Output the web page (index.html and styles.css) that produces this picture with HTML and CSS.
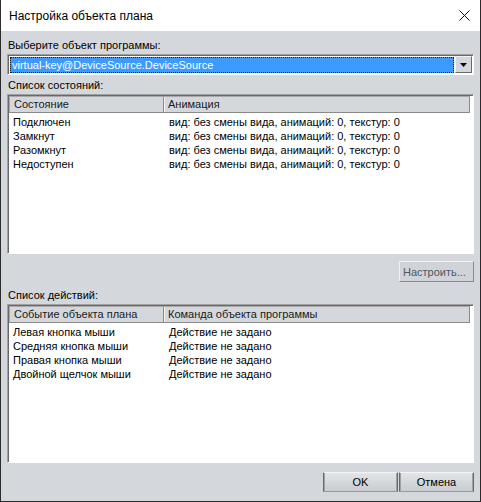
FILE: index.html
```html
<!DOCTYPE html>
<html lang="ru">
<head>
  <meta charset="UTF-8" />
  <title>Настройка объекта плана</title>
  <link rel="stylesheet" href="styles.css">
</head>
<body>
  <div class="window">
    <div class="titlebar">
      <span class="title">Настройка объекта плана</span>
      <svg class="close" width="11" height="11" viewBox="0 0 11 11">
        <path d="M0.5 0.5 L10.5 10.5 M10.5 0.5 L0.5 10.5" stroke="#111" stroke-width="1" fill="none" />
      </svg>
    </div>

    <div class="content">
      <div class="label label-first">Выберите объект программы:</div>
      <div class="combo">
        <div class="combo-value">virtual-key@DeviceSource.DeviceSource</div>
        <div class="combo-btn">
          <svg width="7" height="4" viewBox="0 0 7 4"><path d="M0 0 H7 L3.5 4 Z" fill="#000" /></svg>
        </div>
      </div>

      <div class="label">Список состояний:</div>
      <div class="list">
        <div class="list-head">
          <div class="col col-first">Состояние</div>
          <div class="col">Анимация</div>
        </div>
        <div class="list-body">
          <div class="row"><span class="col-first">Подключен</span><span>вид: без смены вида, анимаций: 0, текстур: 0</span></div>
          <div class="row"><span class="col-first">Замкнут</span><span>вид: без смены вида, анимаций: 0, текстур: 0</span></div>
          <div class="row"><span class="col-first">Разомкнут</span><span>вид: без смены вида, анимаций: 0, текстур: 0</span></div>
          <div class="row"><span class="col-first">Недоступен</span><span>вид: без смены вида, анимаций: 0, текстур: 0</span></div>
        </div>
      </div>

      <div class="tools">
        <button class="btn-flat">Настроить...</button>
      </div>

      <div class="label">Список действий:</div>
      <div class="list list-actions">
        <div class="list-head">
          <div class="col col-first">Событие объекта плана</div>
          <div class="col">Команда объекта программы</div>
        </div>
        <div class="list-body">
          <div class="row"><span class="col-first">Левая кнопка мыши</span><span>Действие не задано</span></div>
          <div class="row"><span class="col-first">Средняя кнопка мыши</span><span>Действие не задано</span></div>
          <div class="row"><span class="col-first">Правая кнопка мыши</span><span>Действие не задано</span></div>
          <div class="row"><span class="col-first">Двойной щелчок мыши</span><span>Действие не задано</span></div>
        </div>
      </div>

      <div class="footer">
        <button class="btn">OK</button>
        <button class="btn">Отмена</button>
      </div>
    </div>
  </div>
</body>
</html>
```

FILE: styles.css
```css
* {
  box-sizing: border-box;
}

body {
  margin: 0;
  font-family: 'Liberation Sans', Arial, sans-serif;
  font-size: 11px;
  color: #000;
  background: #fff;
}

.window {
  width: 481px;
  height: 502px;
  display: flex;
  flex-direction: column;
  border: 1px solid #2b2b2b;
  border-top: none;
  background: #d4d8dc;
}

.titlebar {
  height: 31px;
  flex-shrink: 0;
  display: flex;
  align-items: center;
  justify-content: space-between;
  padding: 0 10px 0 8px;
  background: #fff;
}

.title {
  font-size: 12px;
  color: #000;
}

.close {
  display: block;
}

.content {
  flex: 1;
  display: flex;
  flex-direction: column;
  padding: 0 6px 0 6px;
}

.label {
  line-height: 14px;
  height: 14px;
  margin-top: 3px;
  margin-bottom: 2px;
  padding-left: 1px;
}

.label-first {
  margin-top: 7px;
}

/* combo box with the selected item */
.combo {
  height: 21px;
  display: flex;
  border: 1px solid #a0a0a0;
  border-right-color: #fff;
  border-bottom-color: #fff;
  box-shadow: inset 1px 1px 0 #696969;
  background: #fff;
  padding: 2px 1px 1px 2px;
}

.combo-value {
  flex: 1;
  background: #3d9bff;
  color: #fff;
  line-height: 15px;
  padding-left: 1px;
  border: 1px dotted #1a1a1a;
  margin-right: 1px;
}

.combo-btn {
  width: 17px;
  display: flex;
  align-items: center;
  justify-content: center;
  background: #d4d8dc;
  border: 1px solid;
  border-color: #f2f2f2 #696969 #696969 #f2f2f2;
  margin-top: -1px;
}

/* list views */
.list {
  height: 160px;
  display: flex;
  flex-direction: column;
  border: 1px solid #a0a0a0;
  border-right-color: #fff;
  border-bottom-color: #fff;
  box-shadow: inset 1px 1px 0 #696969;
  background: #fff;
  padding: 1px 1px 0 1px;
}

.list-actions {
  height: 159px;
}

.list-head {
  height: 17px;
  flex-shrink: 0;
  display: flex;
  background: #d4d8dc;
  border: 1px solid #8a8a8a;
  border-top-color: #a8a8a8;
  border-left-color: #a8a8a8;
  color: #1a1a1a;
  line-height: 15px;
  margin-right: 2px;
}

.list-head .col {
  padding-left: 4px;
}

.list-head .col-first {
  width: 154px;
  flex-shrink: 0;
  border-right: 1px solid #8a8a8a;
  box-shadow: 1px 0 0 #f4f4f4;
}

.list-body {
  padding-top: 2px;
}

.row {
  display: flex;
  line-height: 14px;
  height: 14px;
  padding-left: 4px;
}

.row .col-first {
  width: 156px;
  flex-shrink: 0;
}

.tools {
  display: flex;
  justify-content: flex-end;
  margin-top: 7px;
  margin-bottom: 3px;
}

.btn-flat {
  width: 75px;
  height: 21px;
  padding: 0;
  font-family: inherit;
  font-size: 11px;
  color: #4b5866;
  background: #d0d4d8;
  border: 1px solid;
  border-color: #f2f2f2 #8a8a8a #8a8a8a #f2f2f2;
  text-align: left;
  padding-left: 3px;
}

.footer {
  display: flex;
  justify-content: flex-end;
  gap: 1px;
  margin-top: 9px;
}

.btn {
  width: 75px;
  height: 20px;
  padding: 0;
  font-family: inherit;
  font-size: 11px;
  color: #000;
  background: linear-gradient(#e2e5e7, #c8ccd0);
  border: 1px solid;
  border-color: #f4f4f4 #6a6a6a #9a9a9a #6a6a6a;
  box-shadow: inset 1px 0 0 #a0a0a0, inset -1px 0 0 #a0a0a0;
}
```
